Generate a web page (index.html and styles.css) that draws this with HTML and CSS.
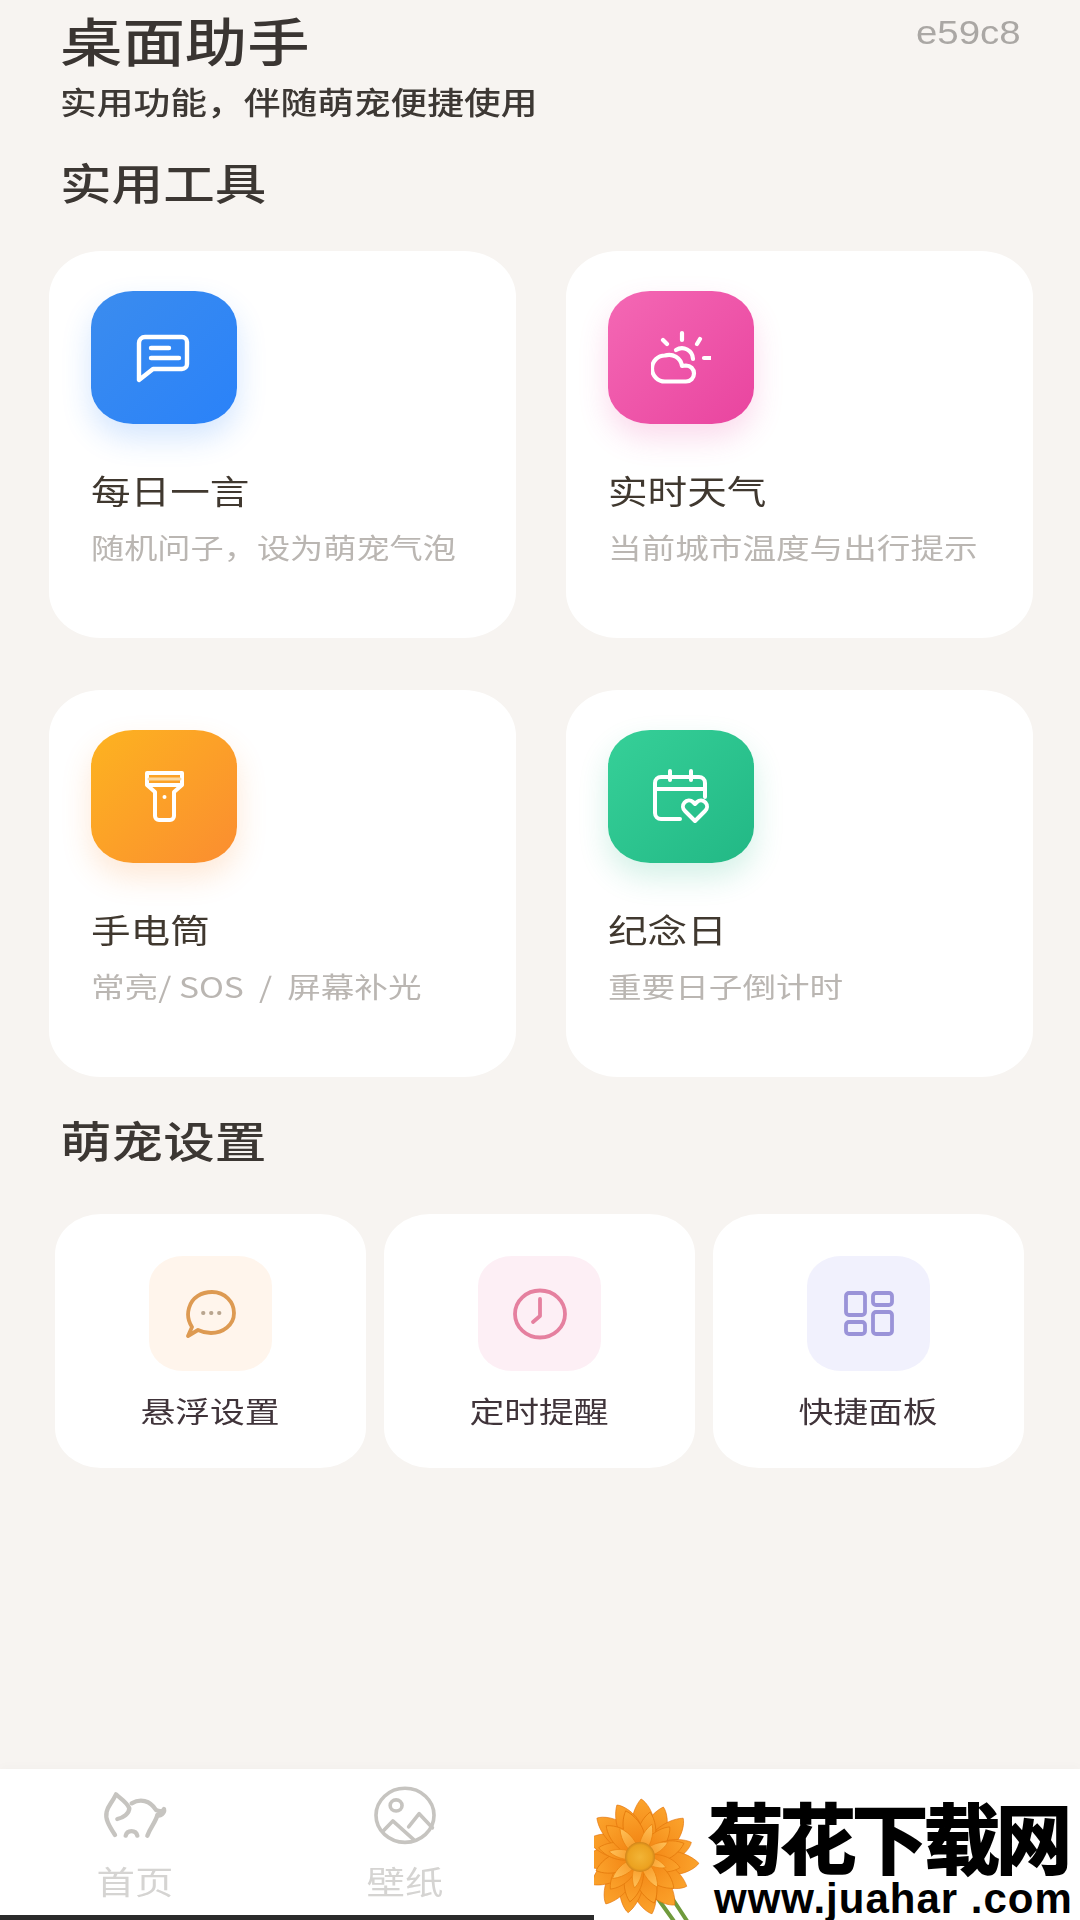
FILE: index.html
```html
<!DOCTYPE html>
<html lang="zh-CN">
<head>
    <meta charset="UTF-8">
    <meta name="viewport" content="width=device-width, initial-scale=1.0">
    <title>桌面助手</title>
    <link rel="stylesheet" href="styles.css">
</head>
<body>

    <main class="main">
        <header class="top">
            <div>
                <h1 class="page-title"><span class="tx">桌面助手</span></h1>
                <p class="page-sub"><span class="tx tx-sub">实用功能，伴随萌宠便捷使用</span></p>
            </div>
            <span class="version tx-r">e59c8</span>
        </header>

        <h2 class="section"><span class="tx">实用工具</span></h2>
        <section class="tools">
            <div class="tool">
                <div class="tile blue">
                    <svg width="56" height="52" viewBox="136 332 56 52" fill="none" stroke="#fff" stroke-width="4.400" stroke-linecap="round" stroke-linejoin="round">
                        <path d="M139 380V343a6 6 0 0 1 6-6h37a5 5 0 0 1 5 5v22a5 5 0 0 1-5 5h-29z"/>
                        <path d="M151 348h18M151 358h28"/>
                    </svg>
                </div>
                <h3 class="tool-name"><span class="tx">每日一言</span></h3>
                <p class="tool-desc"><span class="tx tx-sub">随机问子，设为萌宠气泡</span></p>
            </div>
            <div class="tool">
                <div class="tile pink">
                    <svg width="60" height="56" viewBox="650 330 60 56" fill="none" stroke="#fff" stroke-width="4.200" stroke-linecap="round" stroke-linejoin="round">
                        <path d="M664 381.500H685A8 8 0 0 0 685 365.500L681 366A13 13 0 0 0 664 355.500A13 13 0 0 0 664 381.500Z"/>
                        <path d="M675 350A11 11 0 0 1 692 359"/>
                        <path d="M681 333v7M662 340l4 4M699 339l-3 5M703 358h6"/>
                    </svg>
                </div>
                <h3 class="tool-name"><span class="tx">实时天气</span></h3>
                <p class="tool-desc"><span class="tx">当前城市温度与出行提示</span></p>
            </div>
            <div class="tool">
                <div class="tile orange">
                    <svg width="46" height="58" viewBox="140 768 46 58" fill="none" stroke="#fff" stroke-width="4" stroke-linecap="round" stroke-linejoin="round">
                        <path d="M146 773H181V785L173 792V816a4 4 0 0 1-4 4H158a4 4 0 0 1-4-4V792L146 785Z"/>
                        <path d="M148 779h31" stroke="#fbd9a2" stroke-width="3"/>
                        <path d="M148 785h31"/>
                        <circle cx="163.500" cy="797" r="2" fill="#fff" stroke="none"/>
                    </svg>
                </div>
                <h3 class="tool-name"><span class="tx">手电筒</span></h3>
                <p class="tool-desc"><span class="tx">常亮/&nbsp;SOS&nbsp;&nbsp;/&nbsp;&nbsp;屏幕补光</span></p>
            </div>
            <div class="tool">
                <div class="tile green">
                    <svg width="60" height="56" viewBox="652 770 60 56" fill="none" stroke="#fff" stroke-width="4" stroke-linecap="round" stroke-linejoin="round">
                        <path d="M681 820H662a6 6 0 0 1-6-6V784a6 6 0 0 1 6-6h38a6 6 0 0 1 6 6v14"/>
                        <path d="M656 790h50M671 772v9M692 772v9"/>
                        <path d="M696 822L686 812a6 6 0 0 1 8-9l2 2 2-2a6 6 0 0 1 8 9z"/>
                    </svg>
                </div>
                <h3 class="tool-name"><span class="tx">纪念日</span></h3>
                <p class="tool-desc"><span class="tx">重要日子倒计时</span></p>
            </div>
        </section>

        <h2 class="section section-2"><span class="tx">萌宠设置</span></h2>
        <section class="settings">
            <div class="setting">
                <div class="mini peach">
                    <svg width="52" height="50" viewBox="184 1288 52 50" fill="none" stroke="#dd9a52" stroke-width="3.800" stroke-linecap="round" stroke-linejoin="round">
                        <path d="M187 1335L191 1326C187 1320 186 1314 188 1307C191 1296 201 1291 211 1291C224 1291 233 1301 233 1312C233 1324 222 1332 210 1332C205 1332 201 1331 197 1329Z"/>
                        <path d="M202 1312h.500M210 1312h.500M218 1312h.500" stroke="#b9a58f"/>
                    </svg>
                </div>
                <span class="setting-name tx-c">悬浮设置</span>
            </div>
            <div class="setting">
                <div class="mini rose">
                    <svg width="56" height="52" viewBox="512 1286 56 52" fill="none" stroke="#e5809f" stroke-width="3.800" stroke-linecap="round" stroke-linejoin="round">
                        <ellipse cx="540" cy="1312" rx="25" ry="23.500"/>
                        <path d="M540 1297v17l-7 6"/>
                    </svg>
                </div>
                <span class="setting-name tx-c">定时提醒</span>
            </div>
            <div class="setting">
                <div class="mini lilac">
                    <svg width="50" height="46" viewBox="844 1291 50 46" fill="none" stroke="#9a93d8" stroke-width="3.800" stroke-linejoin="round">
                        <rect x="846" y="1293" width="19" height="22" rx="3"/>
                        <rect x="846" y="1322" width="19" height="12" rx="3"/>
                        <rect x="873" y="1293" width="19" height="12" rx="3"/>
                        <rect x="873" y="1312" width="19" height="22" rx="3"/>
                    </svg>
                </div>
                <span class="setting-name tx-c">快捷面板</span>
            </div>
        </section>
    </main>

    <nav class="tabbar">
        <div class="tab">
            <svg width="70" height="53" viewBox="60 50 210 160" fill="none" stroke="#c6c4c0" stroke-width="13" stroke-linecap="round" stroke-linejoin="round">
                <path d="M105 190C85 160 75 140 80 120C85 100 95 95 108 68C120 80 140 90 148 110C148 125 130 138 112 142"/>
                <path d="M155 95C180 80 210 85 228 115C238 120 250 120 252 112C255 125 240 135 232 130C228 150 212 165 202 192"/>
                <path d="M137 192A18 18 0 0 1 172 192"/>
            </svg>
            <span class="tab-name tx-c">首页</span>
        </div>
        <div class="tab">
            <svg width="70" height="60" viewBox="870 38 204 182" fill="none" stroke="#c6c4c0" stroke-width="11" stroke-linecap="round" stroke-linejoin="round">
                <ellipse cx="972" cy="130" rx="88" ry="82"/>
                <ellipse cx="945" cy="100" rx="18" ry="17"/>
                <path d="M905 178L935 147L1000 205M983 165L1015 125L1055 168"/>
            </svg>
            <span class="tab-name tx-c">壁纸</span>
        </div>
    </nav>

    <!-- 水印 -->
    <div class="mark">
        <svg class="flower" width="114" height="130" viewBox="0 0 114 130">
            <defs>
                <linearGradient id="pg" x1="0" y1="1" x2="0" y2="0">
                    <stop offset="0" stop-color="#f07c0c"/>
                    <stop offset="1" stop-color="#fba32c"/>
                </linearGradient>
                <linearGradient id="pl" x1="0" y1="1" x2="0" y2="0">
                    <stop offset="0" stop-color="#f58a12"/>
                    <stop offset="1" stop-color="#ffc25a"/>
                </linearGradient>
                <radialGradient id="eye">
                    <stop offset="0" stop-color="#f2b436"/>
                    <stop offset=".8" stop-color="#eca220"/>
                    <stop offset="1" stop-color="#d0841a"/>
                </radialGradient>
                <path id="p1" d="M0 0C-14 -16 -13 -44 -2 -58C3 -56 13 -44 13 -30C13 -18 6 -8 0 0Z" fill="url(#pg)" stroke="#e2720a" stroke-width=".6"/>
                <path id="p2" d="M0 0C-11 -13 -11 -34 -1 -46C6 -40 11 -28 10 -20C9 -12 4 -5 0 0Z" fill="url(#pg)" stroke="#e47a0c" stroke-width=".8"/>
                <path id="p3" d="M0 0C-7 -10 -7 -24 0 -35C6 -26 7 -12 0 0Z" fill="url(#pl)" stroke="#ec8410" stroke-width=".8"/>
            </defs>
            <path d="M62 106L82 134M78 108L95 134" stroke="#6f9a3c" stroke-width="4" fill="none"/>
            <g transform="translate(46 67)">
                <use href="#p1" transform="rotate(3)"/>
                <use href="#p1" transform="rotate(27) scale(.95)"/>
                <use href="#p1" transform="rotate(50)"/>
                <use href="#p1" transform="rotate(76) scale(.92)"/>
                <use href="#p1" transform="rotate(98) scale(1.02)"/>
                <use href="#p1" transform="rotate(124) scale(.95)"/>
                <use href="#p1" transform="rotate(146) scale(1.02)"/>
                <use href="#p1" transform="rotate(170)"/>
                <use href="#p1" transform="rotate(194) scale(.98)"/>
                <use href="#p1" transform="rotate(218)"/>
                <use href="#p1" transform="rotate(242) scale(.95)"/>
                <use href="#p1" transform="rotate(266)"/>
                <use href="#p1" transform="rotate(290) scale(.95)"/>
                <use href="#p1" transform="rotate(314)"/>
                <use href="#p1" transform="rotate(338) scale(.98)"/>
                <use href="#p2" transform="rotate(14)"/>
                <use href="#p2" transform="rotate(46) scale(.92)"/>
                <use href="#p2" transform="rotate(74)"/>
                <use href="#p2" transform="rotate(106) scale(.9)"/>
                <use href="#p2" transform="rotate(134)"/>
                <use href="#p2" transform="rotate(164) scale(1.05)"/>
                <use href="#p2" transform="rotate(194)"/>
                <use href="#p2" transform="rotate(224) scale(.95)"/>
                <use href="#p2" transform="rotate(254)"/>
                <use href="#p2" transform="rotate(284) scale(.92)"/>
                <use href="#p2" transform="rotate(314)"/>
                <use href="#p2" transform="rotate(344) scale(1.05)"/>
                <use href="#p3" transform="rotate(20)"/>
                <use href="#p3" transform="rotate(62) scale(.9)"/>
                <use href="#p3" transform="rotate(112) scale(.8)"/>
                <use href="#p3" transform="rotate(150)"/>
                <use href="#p3" transform="rotate(190) scale(.9)"/>
                <use href="#p3" transform="rotate(232)"/>
                <use href="#p3" transform="rotate(280) scale(.9)"/>
                <use href="#p3" transform="rotate(325)"/>
                <circle r="15" fill="url(#eye)"/>
            </g>
        </svg>
        <div class="mark-text">
            <div class="mark-name">菊花下载网</div>
            <div class="mark-url">www.juahar .com</div>
        </div>
    </div>

</body>
</html>
```

FILE: styles.css
```css
* {
    box-sizing: border-box;
}
html, body {
    margin: 0;
    padding: 0;
}
body {
    position: relative;
    width: 1080px;
    height: 1920px;
    overflow: hidden;
    display: flex;
    flex-direction: column;
    background: #f7f4f1;
    font-family: "Noto Sans CJK SC", "Noto Sans", sans-serif;
}
h1, h2, h3, p {
    margin: 0;
    font-weight: normal;
}

/* the shot is about 1.2x wider than tall, so text gets stretched */
.tx, .tx-r, .tx-c {
    display: inline-block;
    white-space: nowrap;
    transform: scaleX(1.2);
}
.tx {
    transform-origin: left center;
}
.tx-sub {
    transform: scaleX(1.185);
}
.tx-r {
    transform-origin: right center;
}
.tx-c {
    transform-origin: center;
}

.main {
    flex: 1;
    padding-top: 10px;
    filter: blur(0.5px);
}
.top {
    display: flex;
    justify-content: space-between;
    padding: 0 59px 0 60px;
}
.page-title {
    font-size: 52px;
    line-height: 60px;
    font-weight: 500;
    color: #3a3532;
}
.page-sub {
    margin-top: 11px;
    font-size: 31px;
    line-height: 40px;
    font-weight: 500;
    color: #3d3834;
}
.version {
    margin-top: 2px;
    font-family: "Liberation Sans", Arial, sans-serif;
    font-size: 34px;
    line-height: 40px;
    color: #aaa7a4;
    transform: scaleX(1.13);
}
.section {
    margin-top: 35px;
    padding-left: 60px;
    font-size: 43px;
    line-height: 50px;
    font-weight: 500;
    color: #3c3733;
}
.section-2 {
    margin-top: 37px;
}

.tools {
    display: grid;
    grid-template-columns: 467px 467px;
    grid-auto-rows: 387px;
    gap: 52px 50px;
    margin-top: 45px;
    padding-left: 49px;
}
.tool {
    padding: 40px 42px;
    background: #fff;
    border-radius: 52px / 46px;
}
.tile {
    display: flex;
    align-items: center;
    justify-content: center;
    width: 146px;
    height: 133px;
    border-radius: 42px / 36px;
}
.blue {
    background: linear-gradient(135deg, #3b8cee, #2a82f9);
    box-shadow: 0 14px 30px rgba(42, 130, 249, 0.2);
}
.pink {
    background: linear-gradient(135deg, #f468b4, #e9449f);
    box-shadow: 0 14px 30px rgba(233, 68, 159, 0.2);
}
.orange {
    background: linear-gradient(135deg, #fdb320, #fb8d30);
    box-shadow: 0 14px 30px rgba(251, 141, 48, 0.2);
}
.green {
    background: linear-gradient(135deg, #36d098, #22b885);
    box-shadow: 0 14px 30px rgba(34, 184, 133, 0.2);
}
.tool-name {
    margin-top: 44px;
    font-size: 33px;
    line-height: 44px;
    color: #40382f;
}
.tool-desc {
    margin-top: 15px;
    font-size: 28px;
    line-height: 40px;
    color: #bab6b2;
}

.settings {
    display: grid;
    grid-template-columns: 311px 311px 311px;
    gap: 18px;
    margin-top: 50px;
    padding-left: 55px;
}
.setting {
    display: flex;
    flex-direction: column;
    align-items: center;
    height: 254px;
    padding-top: 42px;
    background: #fff;
    border-radius: 46px / 40px;
}
.mini {
    display: flex;
    align-items: center;
    justify-content: center;
    width: 123px;
    height: 115px;
    border-radius: 34px / 30px;
}
.peach {
    background: #fff5ec;
}
.rose {
    background: #fdeff5;
}
.lilac {
    background: #f1f1fd;
}
.setting-name {
    margin-top: 19px;
    font-size: 29px;
    line-height: 40px;
    color: #40343a;
}

.tabbar {
    display: grid;
    grid-template-columns: repeat(4, 270px);
    height: 151px;
    padding-top: 16px;
    background: #fff;
    border-bottom: 5px solid #2b2b2b;
    box-shadow: 0 -4px 8px rgba(0, 0, 0, 0.015);
}
.tab {
    display: flex;
    flex-direction: column;
    align-items: center;
}
.tab svg {
    height: 60px;
}
.tab-name {
    margin-top: 15px;
    font-size: 32px;
    line-height: 40px;
    color: #d5d4d2;
}

/* watermark sits over the last two tabs */
.mark {
    position: absolute;
    right: 0;
    bottom: 0;
    display: flex;
    width: 486px;
    height: 130px;
    background: #fff;
}
.mark-text {
    padding-top: 2px;
    color: #000;
}
.mark-name {
    font-size: 76px;
    line-height: 86px;
    font-weight: 700;
    letter-spacing: -4px;
    -webkit-text-stroke: 2px #000;
    white-space: nowrap;
}
.mark-url {
    margin-left: 6px;
    font-family: "Liberation Sans", Arial, sans-serif;
    font-size: 42px;
    line-height: 42px;
    font-weight: 700;
    letter-spacing: 1px;
    white-space: nowrap;
}
```
